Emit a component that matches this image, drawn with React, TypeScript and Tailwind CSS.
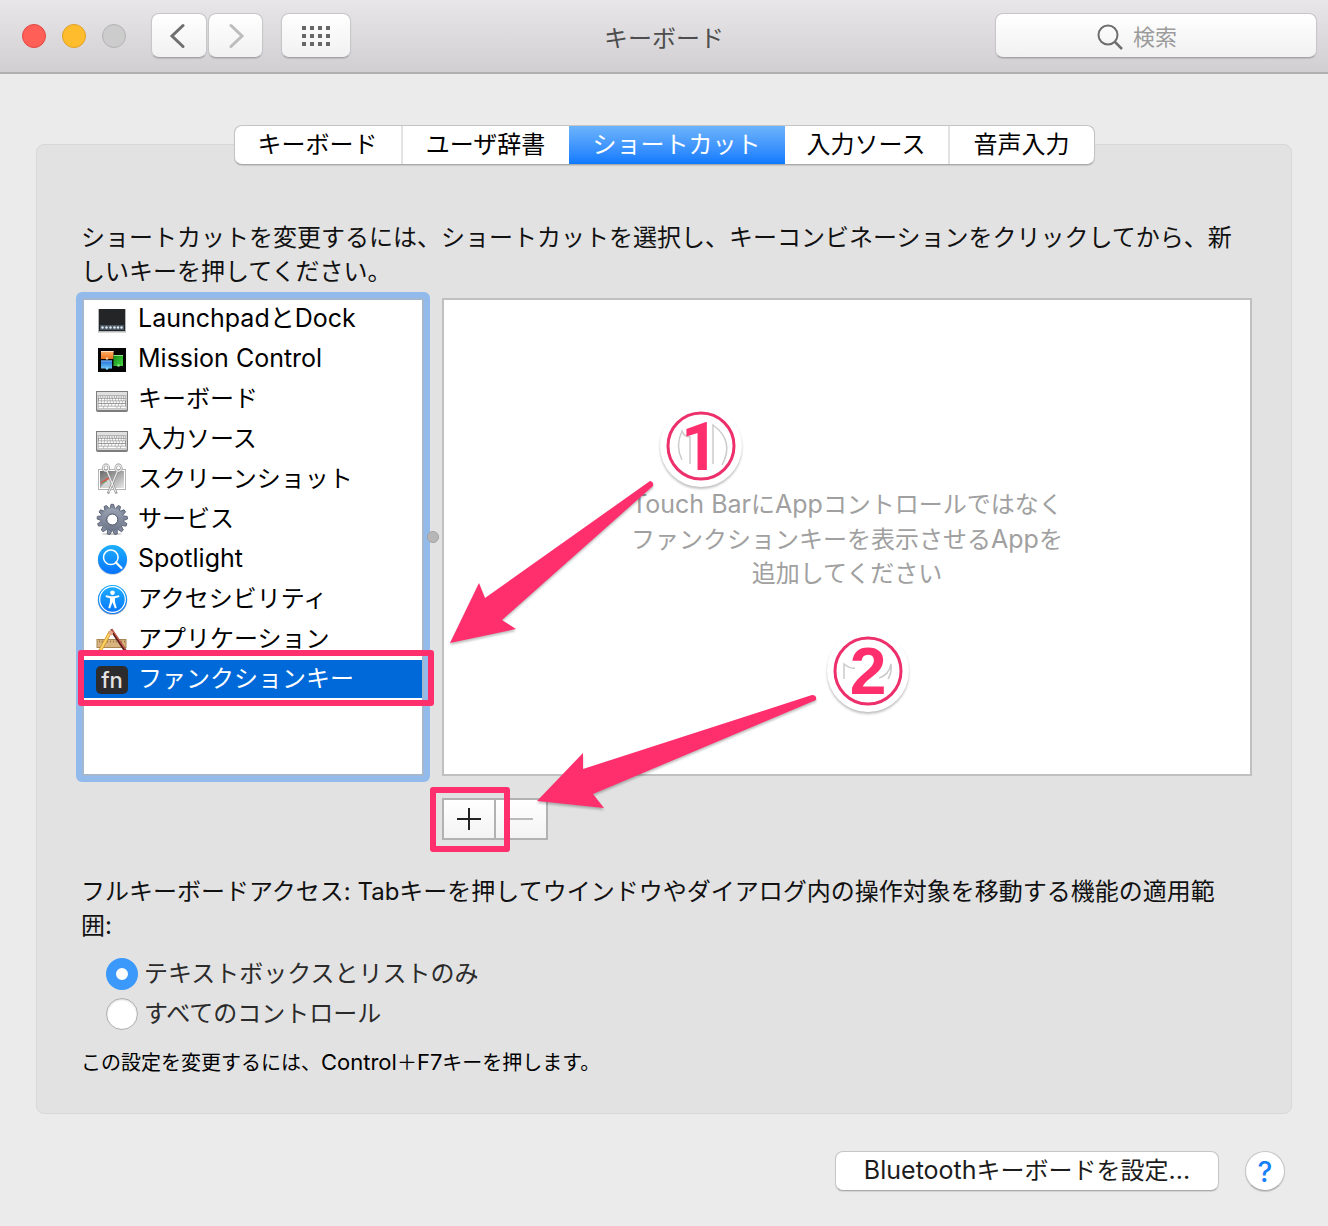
import { useState } from "react";
import type { ReactNode } from "react";

const TABS = [
  { label: "キーボード", width: "w-[168px]" },
  { label: "ユーザ辞書", width: "w-[166px]" },
  { label: "ショートカット", width: "w-[216px]" },
  { label: "入力ソース", width: "w-[165px]" },
  { label: "音声入力", width: "w-[144px]" },
];

const GEAR_TEETH = Array.from({ length: 13 }, (_, i) => (i * 360) / 13);

// Latin words run a little larger than the kana around them
function En({ children }: { children: ReactNode }) {
  return <span className="text-[25px]">{children}</span>;
}

function Icon({ children }: { children: ReactNode }) {
  return (
    <svg viewBox="0 0 32 32" className="size-8 shrink-0" aria-hidden="true">
      {children}
    </svg>
  );
}

function LaunchpadIcon() {
  return (
    <Icon>
      <rect x="2" y="6" width="28" height="23.500" fill="#b5b8bb" />
      <rect x="3" y="6" width="26" height="22" fill="#242527" />
      <rect x="4" y="22" width="24" height="5" fill="#4b5966" />
      {[6.5, 10.5, 14.5, 18.5, 22, 25.5].map((cx) => (
        <circle key={cx} cx={cx} cy="24.5" r="1.2" fill="#e3eaf0" />
      ))}
    </Icon>
  );
}

function MissionControlIcon() {
  return (
    <Icon>
      <defs>
        <linearGradient id="mcOrange" x1="0" y1="0" x2="0" y2="1">
          <stop offset="0" stopColor="#ffb36b" />
          <stop offset="1" stopColor="#e8711a" />
        </linearGradient>
        <linearGradient id="mcBlue" x1="0" y1="0" x2="0" y2="1">
          <stop offset="0" stopColor="#1f6fd8" />
          <stop offset="1" stopColor="#6cc3f5" />
        </linearGradient>
        <linearGradient id="mcGreen" x1="0" y1="0" x2="1" y2="1">
          <stop offset="0" stopColor="#128a1c" />
          <stop offset="1" stopColor="#47d63c" />
        </linearGradient>
      </defs>
      <rect x="2" y="5" width="28" height="24" fill="#050505" />
      <rect x="5" y="8" width="12.500" height="8" fill="url(#mcOrange)" />
      <path d="M5 8.500h12.500" stroke="#ffe0bd" />
      <rect x="5" y="17.500" width="11" height="8" fill="url(#mcBlue)" />
      <path d="M5 18h11" stroke="#8fc0f4" />
      <rect x="17.500" y="12" width="9.500" height="11" fill="url(#mcGreen)" />
      <path d="M17.500 12.500H27" stroke="#8be587" />
      <circle cx="11" cy="15.500" r="1.300" fill="#f8cfa2" />
      <circle cx="11" cy="25.500" r="1.300" fill="#80d1ff" />
      <circle cx="22.500" cy="22.500" r="1.300" fill="#8bf082" />
    </Icon>
  );
}

function KeyboardIcon() {
  return (
    <Icon>
      <path d="M0 8h32v19q0 2-2 2H2q-2 0-2-2z" fill="#7d7d7d" />
      <path d="M1 9h30v17q0 1-1 1H2q-1 0-1-1z" fill="#d0d0d0" />
      <path d="M1 9h30v3H1z" fill="#e0e0e0" />
      <rect x="2" y="12.500" width="28" height="13" fill="#989898" />
      <g stroke="#fff" strokeWidth="1.700">
        <path d="M2.500 14h27" strokeDasharray="1.700 .6" />
        <path d="M3 16.600h26.500" strokeDasharray="2.200 .6" />
        <path d="M2.500 19.200h27" strokeDasharray="2.400 .6" />
        <path d="M2.500 21.800h27" strokeDasharray="2.800 .6" />
        <path d="M2.500 24.400h5m.6 0h3m.5 0h9m.6 0h3m.6 0h5" />
      </g>
    </Icon>
  );
}

function ScreenshotIcon() {
  return (
    <Icon>
      <defs>
        <linearGradient id="shot" x1="0" y1="0" x2="1" y2="1">
          <stop offset="0" stopColor="#686868" />
          <stop offset="1" stopColor="#e6e6e6" />
        </linearGradient>
      </defs>
      <rect x="2.500" y="6.500" width="27" height="20" fill="#fff" stroke="#b3b3b3" />
      <rect x="4" y="8" width="24" height="17" fill="url(#shot)" />
      <path d="M4 25l10-11 3 11z" fill="#d5d5d5" />
      <path d="M5 20l8-5" stroke="#d9564a" strokeWidth="2" />
      <path d="M6 20l5-2" stroke="#58ad73" />
      <g fill="none" stroke="#888" strokeWidth="2.400">
        <ellipse cx="10" cy="5" rx="2.800" ry="3.200" />
        <ellipse cx="22.500" cy="5" rx="2.800" ry="3.200" />
        <path d="M11 8l9.500 22.500M21.500 8L12 30.500" />
      </g>
      <g fill="none" stroke="#eee" strokeWidth="1.200">
        <ellipse cx="10" cy="5" rx="2.800" ry="3.200" />
        <ellipse cx="22.500" cy="5" rx="2.800" ry="3.200" />
        <path d="M11 8l9 21.500M21.500 8l-9 21.500" />
      </g>
    </Icon>
  );
}

function GearIcon() {
  return (
    <Icon>
      <defs>
        <linearGradient id="gear" gradientUnits="userSpaceOnUse" x1="0" y1="2" x2="0" y2="30">
          <stop offset="0" stopColor="#a0a8b8" />
          <stop offset="1" stopColor="#697286" />
        </linearGradient>
      </defs>
      <ellipse cx="16" cy="31" rx="10" ry="1" fill="#ccc" />
      {GEAR_TEETH.map((angle) => (
        <path
          key={angle}
          d="M13.800 6L15 1.300h2.600L18.800 6z"
          fill="#808a9c"
          stroke="#50586a"
          strokeWidth=".8"
          transform={`rotate(${angle} 16.300 16.500)`}
        />
      ))}
      <circle cx="16.300" cy="16.500" r="8.400" fill="none" stroke="url(#gear)" strokeWidth="6" />
      <circle cx="16.300" cy="16.500" r="5.500" fill="none" stroke="#4d5567" />
    </Icon>
  );
}

function BlueDefs({ id }: { id: string }) {
  return (
    <defs>
      <linearGradient id={id} x1="0" y1="0" x2="0" y2="1">
        <stop offset="0" stopColor="#1cb0ff" />
        <stop offset="1" stopColor="#0873fb" />
      </linearGradient>
    </defs>
  );
}

function SpotlightIcon() {
  return (
    <Icon>
      <BlueDefs id="spot" />
      <circle cx="16.500" cy="17" r="14.800" fill="#bcc9d8" />
      <circle cx="16.500" cy="16.500" r="14.500" fill="url(#spot)" />
      <circle cx="14.800" cy="14.300" r="7.300" fill="none" stroke="#fff" strokeWidth="1.500" />
      <path d="M20 19.500l5.500 5.500" stroke="#fff" strokeWidth="2.200" strokeLinecap="round" />
    </Icon>
  );
}

function AccessibilityIcon() {
  return (
    <Icon>
      <BlueDefs id="a11y" />
      <circle cx="16.500" cy="17" r="14.800" fill="#9eabb9" />
      <circle cx="16.500" cy="16.500" r="14.500" fill="url(#a11y)" />
      <circle cx="16.500" cy="16.500" r="12.800" fill="none" stroke="#fff" strokeWidth="1.200" />
      <circle cx="16.500" cy="9.800" r="2.300" fill="#fff" />
      <path
        d="M10 12.300l4.700.9h3.600l4.700-.9.400 1.700-4.400 1.300v3.600l1.700 5.900-1.800.6-2.400-6.200-2.400 6.200-1.800-.6 1.700-5.900v-3.600L9.600 14z"
        fill="#fff"
      />
    </Icon>
  );
}

function AppsIcon() {
  return (
    <Icon>
      <rect x="1" y="16.500" width="29" height="8" fill="#d9b47e" stroke="#a98552" />
      <path d="M3 18.500h26" stroke="#7d6236" strokeWidth="2" strokeDasharray=".7 2.100" />
      <path d="M15 6.500L29.500 28" stroke="#5b2020" strokeWidth="3" />
      <path d="M16 6.500L29.500 26.500" stroke="#d8604f" strokeWidth="1.200" />
      <path d="M14.500 8.500L4 28" stroke="#d08d22" strokeWidth="3.500" />
      <path d="M14 9.500L4.500 27" stroke="#ffd566" strokeWidth="2" />
      <path d="M14.500 6.500l-2.200 4.200 3.500 1.700 1.600-3z" fill="#e7a78c" />
    </Icon>
  );
}

function FnIcon() {
  return (
    <Icon>
      <rect y="3" width="32" height="28" rx="5" fill="#2c2c2e" />
      <text x="16" y="25" textAnchor="middle" fontSize="22" fontWeight="500" fill="#e2e2e2">
        fn
      </text>
    </Icon>
  );
}

const CATEGORIES = [
  { label: "LaunchpadとDock", icon: <LaunchpadIcon />, latin: true },
  { label: "Mission Control", icon: <MissionControlIcon />, latin: true },
  { label: "キーボード", icon: <KeyboardIcon /> },
  { label: "入力ソース", icon: <KeyboardIcon /> },
  { label: "スクリーンショット", icon: <ScreenshotIcon /> },
  { label: "サービス", icon: <GearIcon /> },
  { label: "Spotlight", icon: <SpotlightIcon />, latin: true },
  { label: "アクセシビリティ", icon: <AccessibilityIcon /> },
  { label: "アプリケーション", icon: <AppsIcon /> },
  { label: "ファンクションキー", icon: <FnIcon /> },
];

function Toolbar() {
  const button =
    "flex h-[45px] items-center justify-center rounded-lg border border-[#c8c6c9] border-b-[#a5a3a6] bg-linear-to-b from-white to-[#f1f1f1] shadow-[0_1px_1px_rgba(0,0,0,0.12)]";

  return (
    <header className="relative flex h-[74px] items-start border-b-2 border-[#b0aeb1] bg-linear-to-b from-[#e8e6e9] to-[#d1cfd2] pt-[13px] pr-[11px] pl-[22px]">
      <div className="mt-[11px] flex gap-4">
        <button aria-label="閉じる" className="size-6 rounded-full border border-[#e2463f] bg-[#ff5f57]" />
        <button aria-label="しまう" className="size-6 rounded-full border border-[#dfa023] bg-[#ffbd2e]" />
        <button aria-label="拡大" disabled className="size-6 rounded-full border border-[#b3b1b3] bg-[#cdcccd]" />
      </div>

      <div className="ml-[25px] flex gap-px">
        <button aria-label="戻る" className={`${button} w-14 pr-1`}>
          <svg viewBox="0 0 16 26" className="h-[26px] w-4" fill="none" stroke="#6f6f6f" strokeWidth="3" strokeLinecap="round">
            <path d="M14 2.500L3 13l11 10.500" />
          </svg>
        </button>
        <button aria-label="進む" disabled className={`${button} w-[55px]`}>
          <svg viewBox="0 0 16 26" className="h-[26px] w-4" fill="none" stroke="#bdbdbd" strokeWidth="3" strokeLinecap="round">
            <path d="M3 2.500L14 13 3 23.500" />
          </svg>
        </button>
      </div>

      <button aria-label="すべてを表示" className={`${button} ml-[18px] w-[70px]`}>
        <svg viewBox="0 0 28 20" className="h-5 w-7" fill="#666">
          {[0, 8, 16].map((y) =>
            [0, 8, 16, 24].map((x) => <rect key={`${x}-${y}`} x={x} y={y} width="4" height="4" />),
          )}
        </svg>
      </button>

      <h1 className="pointer-events-none absolute inset-x-0 top-[21px] text-center leading-9 text-[#4d4d4d]">
        キーボード
      </h1>

      <label className={`${button} ml-auto w-[322px] pt-[2px] pl-[101px]`}>
        <svg viewBox="0 0 26 26" className="size-[26px] shrink-0" fill="none" stroke="#6e6e6e" strokeWidth="2">
          <circle cx="11" cy="11" r="9.500" />
          <path d="M18 18l7 7" strokeWidth="2.500" />
        </svg>
        <input
          type="search"
          aria-label="検索"
          placeholder="検索"
          className="ml-[10px] w-full min-w-0 flex-1 bg-transparent pt-[2px] text-[22px] outline-none placeholder:text-[#9c9c9c]"
        />
      </label>
    </header>
  );
}

function Tabs() {
  return (
    <div
      role="tablist"
      className="mx-auto -mt-5 flex h-10 w-fit overflow-hidden rounded-lg border border-[#c4c4c4] border-b-[#a9a9a9] bg-white shadow-[0_1px_1px_rgba(0,0,0,0.12)]"
    >
      {TABS.map(({ label, width }, i) => (
        <button
          key={label}
          role="tab"
          aria-selected={i === 2}
          className={`${width} leading-9 ${
            i === 2
              ? "bg-linear-to-b from-[#6cb3fa] to-[#0a7aff] text-white"
              : "text-black"
          } ${i === 0 || i === 3 ? "border-r-2 border-[#e2e2e2]" : ""}`}
        >
          {label}
        </button>
      ))}
    </div>
  );
}

function Annotations() {
  return (
    <svg
      viewBox="442 298 480 540"
      className="pointer-events-none absolute top-[6px] left-[366px] h-[540px] w-[480px] drop-shadow-[0_2px_1px_rgba(0,0,0,0.25)]"
    >
      <g fill="#ff2f6e">
        <path d="M650 481q4 1 3 5L502 620l14 9-66 14 29-60 6 15z" />
        <path d="M812 695q5 0 4 5L593 794l11 14-67-7 46-48v16z" />
      </g>
      <circle cx="701" cy="446" r="41" fill="#fff" />
      <circle cx="868" cy="671" r="41" fill="#fff" />
      <g fill="none" stroke="#cbcbcb" strokeWidth="1.500">
        <path d="M690 464v-27q-6 0-8-6-7 15 0 29M713 464v-39q22 16 9 40" />
        <path d="M844 679v-15q6 5 11 4M879 678q10-3 12-14 1 9-3 15" />
      </g>
      <g fill="none" stroke="#ed2f6b" strokeWidth="3">
        <circle cx="701" cy="446" r="33" />
        <circle cx="868" cy="671" r="33" />
      </g>
      <g fill="#ff2f6e" textAnchor="middle" fontSize="66" fontWeight="700">
        <text x="700" y="470" className="font-[Roboto,sans-serif]">1</text>
        <text x="868" y="694" className="font-['Liberation_Sans',sans-serif]">2</text>
      </g>
    </svg>
  );
}

function ShortcutLists() {
  const [selected, setSelected] = useState("ファンクションキー");

  return (
    <div className="relative">
      <div className="flex">
        <div className="-mr-[6px] w-[354px] shrink-0 rounded-md bg-[#92bbec] p-[6px]">
          <ul role="listbox" aria-label="カテゴリ" className="h-[478px] border-2 border-[#a3b8d0] bg-white">
            {CATEGORIES.map(({ label, icon, latin }) => (
              <li key={label} role="option" aria-selected={label === selected} className="relative mb-[2px]">
                <button
                  onClick={() => setSelected(label)}
                  className={`flex h-[38px] w-full items-center gap-[10px] pl-3 text-left ${
                    label === selected ? "bg-[#0069d9] text-white" : "text-black"
                  } ${latin ? "text-[25px]" : ""}`}
                >
                  {icon}
                  {label}
                </button>
                {label === "ファンクションキー" && (
                  <span className="pointer-events-none absolute -top-[10px] -right-3 -bottom-2 -left-[6px] rounded-[3px] border-[6px] border-[#ff2f6e]" />
                )}
              </li>
            ))}
          </ul>
        </div>

        <div className="flex w-[18px] shrink-0 items-center justify-center">
          <span className="size-3 shrink-0 rounded-full border border-[#a2a2a2] bg-[#b7b7b7]" />
        </div>

        <div className="my-[6px] flex flex-1 items-center justify-center border-2 border-[#c0c0c0] bg-white pt-1 text-center leading-[34px] text-[#a0a0a0]">
          <p>
            <En>Touch Bar</En>に<En>App</En>コントロールではなく
            <br />
            ファンクションキーを表示させる<En>App</En>を
            <br />
            追加してください
          </p>
        </div>
      </div>

      <div className="mt-4 ml-[366px] flex">
        <div className="relative z-10">
          <button
            aria-label="追加"
            className="flex h-[42px] w-[54px] items-center justify-center border-2 border-[#b2b2b2] bg-linear-to-b from-white to-[#f3f3f3]"
          >
            <svg viewBox="0 0 24 24" className="size-6" stroke="#222" strokeWidth="2">
              <path d="M0 12h24M12 1v22" />
            </svg>
          </button>
          <span className="pointer-events-none absolute -top-[11px] -right-[14px] -bottom-3 -left-3 rounded-[3px] border-[6px] border-[#ff2f6e]" />
        </div>
        <button
          aria-label="削除"
          disabled
          className="-ml-[2px] flex h-[42px] w-[54px] items-center justify-center border-2 border-[#b2b2b2] bg-linear-to-b from-white to-[#f3f3f3]"
        >
          <svg viewBox="0 0 24 24" className="size-6" stroke="#bababa" strokeWidth="2">
            <path d="M0 12h24" />
          </svg>
        </button>
      </div>

      <Annotations />
    </div>
  );
}

function KeyboardAccess() {
  const radio =
    "size-8 shrink-0 appearance-none rounded-full border border-[#adadad] bg-white shadow-[inset_0_1px_2px_rgba(0,0,0,0.15)] checked:border-[10px] checked:border-[#3b99fc] checked:shadow-none";

  return (
    <fieldset className="mt-[35px] pl-[5px] text-[#111]">
      <legend className="pr-4 leading-[34px]">
        フルキーボードアクセス: Tabキーを押してウインドウやダイアログ内の操作対象を移動する機能の適用範囲:
      </legend>
      <div className="mt-[15px] flex flex-col gap-2 pl-[25px] text-[#2b2b2b]">
        <label className="flex items-center gap-[6px] leading-8">
          <input type="radio" name="access" defaultChecked className={radio} />
          テキストボックスとリストのみ
        </label>
        <label className="flex items-center gap-[6px] leading-8">
          <input type="radio" name="access" className={radio} />
          すべてのコントロール
        </label>
      </div>
      <p className="mt-[18px] text-xl leading-7 text-black">
        この設定を変更するには、<span className="text-[22px]">Control</span>＋
        <span className="text-[22px]">F7</span>キーを押します。
      </p>
    </fieldset>
  );
}

export default function App() {
  return (
    <div className="min-h-screen bg-[#ebebeb] font-[Inter,'Noto_Sans_CJK_JP',sans-serif] text-2xl">
      <Toolbar />

      <main className="px-9 pt-[70px]">
        <section className="rounded-lg border border-[#d8d8d8] bg-[#e2e2e2] px-[39px] pb-9">
          <Tabs />
          <p className="mt-14 mb-[3px] pr-4 pl-[5px] leading-[34px] text-[#111]">
            ショートカットを変更するには、ショートカットを選択し、キーコンビネーションをクリックしてから、新しいキーを押してください。
          </p>
          <ShortcutLists />
          <KeyboardAccess />
        </section>

        <footer className="mt-[37px] mr-[7px] flex justify-end gap-[26px]">
          <button className="h-10 w-[384px] rounded-lg border border-[#c6c6c6] border-b-[#aaa] bg-white text-[#1c1c1c] shadow-[0_1px_1px_rgba(0,0,0,0.1)]">
            <En>Bluetooth</En>キーボードを設定<En>...</En>
          </button>
          <button
            aria-label="ヘルプ"
            className="size-10 rounded-full border border-[#c6c6c6] border-b-[#aaa] bg-white pt-[2px] text-[28px] leading-9 font-medium text-[#1480fb] shadow-[0_1px_1px_rgba(0,0,0,0.15)]"
          >
            ?
          </button>
        </footer>
      </main>
    </div>
  );
}
